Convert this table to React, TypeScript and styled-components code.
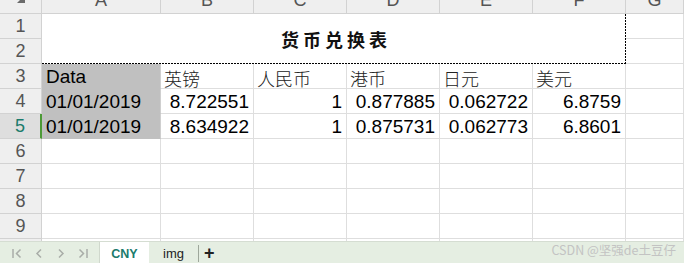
import React from "react";
import styled, { createGlobalStyle } from "styled-components";

const GlobalStyle = createGlobalStyle`
  html, body { margin: 0; padding: 0; background: #fff; }
  body { font-family: "Liberation Sans", Arial, sans-serif; }
`;

const GRID = "#dedede";
const HEAD_LINE = "#d2d2d2";
const TEAL = "#1b7b6c";
const FILL = "#c0c0c0";

const Page = styled.div`
  position: relative;
  width: 684px;
  height: 263px;
  display: flex;
  flex-direction: column;
  overflow: hidden;
`;

const Sheet = styled.div`
  height: 241px;
  flex: none;
  overflow: hidden;
  display: grid;
  grid-template-columns: 42px 119px repeat(5, 93px) 1fr;
  grid-template-rows: 14px repeat(10, 25px);
`;

const Corner = styled.div`
  box-sizing: border-box;
  background: #efefef;
  border-right: 1px solid ${HEAD_LINE};
  border-bottom: 1px solid ${HEAD_LINE};
  display: flex;
  align-items: flex-start;
  padding-left: 16px;
`;

const ColHead = styled.div`
  box-sizing: border-box;
  background: #efefef;
  border-right: 1px solid ${HEAD_LINE};
  border-bottom: 1px solid ${HEAD_LINE};
  text-align: center;
  font-size: 18px;
  line-height: 0;
  color: #555;
`;

const RowHead = styled.div<{ $active?: boolean }>`
  grid-column: 1;
  box-sizing: border-box;
  background: ${(p) => (p.$active ? "#dedede" : "#efefef")};
  border-right: ${(p) => (p.$active ? "2px solid #4c9a36" : `1px solid ${HEAD_LINE}`)};
  border-bottom: 1px solid ${HEAD_LINE};
  display: flex;
  align-items: center;
  justify-content: center;
  font-size: 18px;
  color: ${(p) => (p.$active ? TEAL : "#555")};
`;

const Cell = styled.div<{ $num?: boolean; $cjk?: boolean; $fill?: boolean }>`
  box-sizing: border-box;
  min-width: 0;
  overflow: hidden;
  white-space: nowrap;
  display: flex;
  align-items: flex-end;
  justify-content: ${(p) => (p.$num ? "flex-end" : "flex-start")};
  padding: ${(p) => (p.$cjk ? "0 4px 0 3px" : "0 4px")};
  background: ${(p) => (p.$fill ? FILL : "#fff")};
  border-right: 1px solid ${(p) => (p.$fill ? "#cfcfcf" : GRID)};
  border-bottom: 1px solid ${(p) => (p.$fill ? FILL : GRID)};
  font-family: ${(p) =>
    p.$cjk ? '"Noto Sans CJK SC", sans-serif' : '"Liberation Sans", Arial, sans-serif'};
  font-weight: ${(p) => (p.$cjk ? 300 : 400)};
  font-size: ${(p) => (p.$cjk ? "18px" : "19px")};
  line-height: ${(p) => (p.$cjk ? "20px" : "22px")};
  color: ${(p) => (p.$cjk ? "#222" : "#000")};
`;

const TitleCell = styled.div`
  grid-column: span 6;
  grid-row: span 2;
  display: flex;
  align-items: center;
  justify-content: center;
  padding-left: 4px;
  font-family: "Noto Sans CJK SC", sans-serif;
  font-weight: 700;
  font-size: 18px;
  letter-spacing: 4px;
  color: #111;
  background:
    repeating-linear-gradient(90deg, #000 0 2px, transparent 2px 3px) left bottom / 100% 1px no-repeat,
    repeating-linear-gradient(180deg, #000 0 2px, transparent 2px 3px) right top / 1px 100% no-repeat,
    #fff;
`;

const TabBar = styled.div`
  box-sizing: border-box;
  height: 22px;
  flex: none;
  display: flex;
  align-items: stretch;
  background: #e5eee2;
  border-top: 1px solid #d5ddd2;
`;

const NavGroup = styled.div`
  box-sizing: border-box;
  width: 100px;
  display: flex;
  align-items: center;
  gap: 12px;
  padding: 2px 0 0 12px;
  border-right: 1px solid #d0d8cd;
`;

const Tab = styled.div<{ $active?: boolean }>`
  width: 49px;
  display: flex;
  align-items: center;
  justify-content: center;
  padding-top: 2px;
  background: ${(p) => (p.$active ? "#fff" : "transparent")};
  color: ${(p) => (p.$active ? TEAL : "#222")};
  font-weight: ${(p) => (p.$active ? 700 : 400)};
  font-size: ${(p) => (p.$active ? "12.5px" : "13px")};
`;

const TabDivider = styled.div`
  width: 1px;
  height: 17px;
  align-self: center;
  margin-top: 2px;
  background: #9ea79b;
`;

const AddTab = styled.div`
  display: flex;
  align-items: center;
  padding: 2px 0 0 5px;
  font-size: 18px;
  font-weight: 700;
  color: #222;
`;

const Watermark = styled.div`
  position: absolute;
  right: 8px;
  top: 240px;
  font-family: "Noto Sans CJK SC", sans-serif;
  font-size: 12.5px;
  color: #c3c3c3;
  pointer-events: none;
`;

const columns = ["A", "B", "C", "D", "E", "F", "G"];

const headerRow = ["Data", "英镑", "人民币", "港币", "日元", "美元"];
const dataRows = [
  ["01/01/2019", "8.722551", "1", "0.877885", "0.062722", "6.8759"],
  ["01/01/2019", "8.634922", "1", "0.875731", "0.062773", "6.8601"],
];

const Chevron = ({ dir, bar }: { dir: "left" | "right"; bar?: boolean }) => (
  <svg width="10" height="11" viewBox="0 0 10 11" fill="none" stroke="#a9ada8" strokeWidth="1.5">
    {dir === "left" ? (
      <>
        {bar && <line x1="1" y1="1" x2="1" y2="10" />}
        <polyline points={bar ? "8.5,1.5 4.5,5.5 8.5,9.5" : "7,1.5 3,5.5 7,9.5"} />
      </>
    ) : (
      <>
        <polyline points={bar ? "1.5,1.5 5.5,5.5 1.5,9.5" : "3,1.5 7,5.5 3,9.5"} />
        {bar && <line x1="9" y1="1" x2="9" y2="10" />}
      </>
    )}
  </svg>
);

const App = () => {
  return (
    <Page>
      <GlobalStyle />
      <Sheet>
        <Corner>
          <svg width="10" height="4" viewBox="0 0 10 4">
            <polygon points="4,0 9,0 9,3 1,3" fill="#6b6b6b" />
          </svg>
        </Corner>
        {columns.map((c) => (
          <ColHead key={c}>{c}</ColHead>
        ))}

        <RowHead>1</RowHead>
        <TitleCell>货币兑换表</TitleCell>
        <Cell />
        <RowHead>2</RowHead>
        <Cell />

        <RowHead>3</RowHead>
        {headerRow.map((t, i) => (
          <Cell key={t} $fill={i === 0} $cjk={i > 0}>
            {t}
          </Cell>
        ))}
        <Cell />

        {dataRows.map((row, r) => (
          <React.Fragment key={r}>
            <RowHead $active={r === 1}>{r + 4}</RowHead>
            {row.map((v, i) => (
              <Cell key={i} $fill={i === 0} $num={i > 0}>
                {v}
              </Cell>
            ))}
            <Cell />
          </React.Fragment>
        ))}

        {[6, 7, 8, 9, 10].map((n) => (
          <React.Fragment key={n}>
            <RowHead>{n}</RowHead>
            {columns.map((c) => (
              <Cell key={c} />
            ))}
          </React.Fragment>
        ))}
      </Sheet>

      <TabBar>
        <NavGroup>
          <Chevron dir="left" bar />
          <Chevron dir="left" />
          <Chevron dir="right" />
          <Chevron dir="right" bar />
        </NavGroup>
        <Tab $active>CNY</Tab>
        <Tab>img</Tab>
        <TabDivider />
        <AddTab>+</AddTab>
      </TabBar>

      <Watermark>CSDN @坚强de土豆仔</Watermark>
    </Page>
  );
};

export default App;
